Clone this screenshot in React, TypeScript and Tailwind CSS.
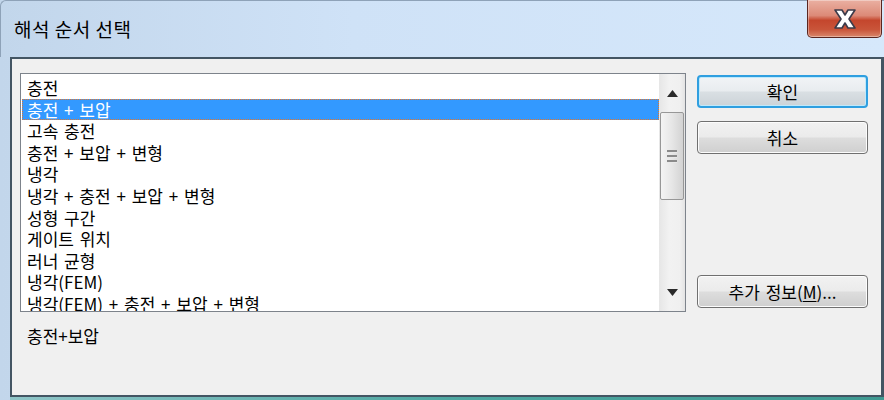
import React from 'react';

const font = { fontFamily: '"Noto Sans CJK KR", "Liberation Sans", sans-serif' };

const items = [
  '충전',
  '충전 + 보압',
  '고속 충전',
  '충전 + 보압 + 변형',
  '냉각',
  '냉각 + 충전 + 보압 + 변형',
  '성형 구간',
  '게이트 위치',
  '러너 균형',
  '냉각(FEM)',
  '냉각(FEM) + 충전 + 보압 + 변형',
];

function CloseButton() {
  return (
    <div className="absolute right-[2px] top-0 w-[75px] h-[38px] rounded-b-[5px] border border-t-0 border-[#5a2620] bg-[linear-gradient(to_bottom,#eab0a2_0%,#dc8a78_42%,#c4462d_55%,#c9553a_80%,#d9876b_100%)] flex items-center justify-center shadow-[inset_0_0_0_1px_rgba(255,255,255,0.35)]">
      <svg width="26" height="22" viewBox="0 0 26 22">
        <path
          d="M3 2 H10 L13 7 L16 2 H23 L17 11 L23 20 H16 L13 15 L10 20 H3 L9 11 Z"
          fill="#ffffff"
          stroke="#3b3b4a"
          strokeWidth="1.6"
          strokeLinejoin="round"
        />
      </svg>
    </div>
  );
}

function Button({ label, primary }: { label: React.ReactNode; primary?: boolean }) {
  return (
    <div
      className={
        'w-[171px] h-[33px] rounded-[4px] flex items-center justify-center text-[17px] leading-none text-black ' +
        (primary
          ? 'border-2 border-[#2f9fe0] shadow-[inset_0_0_0_1px_#bfe9fb] bg-[linear-gradient(to_bottom,#f1f4f6_0%,#e8ecef_48%,#d9dfe3_52%,#ccd3d8_100%)]'
          : 'border border-[#707070] shadow-[inset_0_0_0_1px_#fcfcfc] bg-[linear-gradient(to_bottom,#f2f2f2_0%,#ebebeb_48%,#dddddd_52%,#cfcfcf_100%)]')
      }
    >
      {label}
    </div>
  );
}

function Scrollbar() {
  return (
    <div className="w-[26px] h-full flex flex-col bg-[linear-gradient(to_right,#e6e6e6,#f2f2f2_40%,#f0f0f0_80%,#e3e3e3)]">
      <div className="h-[38px] flex items-center justify-center">
        <svg width="11" height="7" viewBox="0 0 11 7">
          <path d="M5.5 0 L11 7 H0 Z" fill="#2b2b2b" />
        </svg>
      </div>
      <div className="mx-[1px] h-[88px] rounded-[2px] border border-[#979797] bg-[linear-gradient(to_right,#f4f4f4,#e6e6e6_50%,#d3d3d3)] flex flex-col items-center justify-center gap-[2px]">
        <div className="w-[10px] h-[3px] bg-[#8a8a8a] border-b border-[#e8e8e8]" />
        <div className="w-[10px] h-[3px] bg-[#8a8a8a] border-b border-[#e8e8e8]" />
        <div className="w-[10px] h-[3px] bg-[#8a8a8a] border-b border-[#e8e8e8]" />
      </div>
      <div className="flex-1" />
      <div className="h-[38px] flex items-center justify-center">
        <svg width="11" height="7" viewBox="0 0 11 7">
          <path d="M0 0 H11 L5.5 7 Z" fill="#2b2b2b" />
        </svg>
      </div>
    </div>
  );
}

export default function App() {
  return (
    <div
      className="relative w-[884px] h-[400px] overflow-hidden flex flex-col bg-[linear-gradient(to_right,#c2d6eb,#cfe2f7_40%,#d6e8fb)]"
      style={font}
    >
      <div className="h-[57px] shrink-0 flex items-center pl-[13px] pb-[2px] border-t border-l border-[#8ea2b8] rounded-tl-[6px]">
        <span className="text-[19px] leading-none text-black tracking-[0.5px]">해석 순서 선택</span>
      </div>
      <CloseButton />

      <div className="ml-[10px] h-[340px] flex flex-col border-2 border-r-[3px] border-[#435563] bg-[#f0f0f0] pl-[8px] pt-[14px]">
        <div className="flex gap-[11px]">
          <div className="w-[666px] h-[239px] border border-[#7d838b] bg-white flex">
            <div className="flex-1 overflow-hidden pt-[3px] pl-[1px]">
              {items.map((it, i) => (
                <div
                  key={i}
                  className={
                    'h-[21.6px] flex items-center pl-[5px] text-[17px] leading-[21.6px] whitespace-nowrap [word-spacing:2px] ' +
                    (i === 1
                      ? 'bg-[#3399ff] text-white outline-1 outline-dotted outline-[#e2762c] -outline-offset-1'
                      : 'text-black')
                  }
                >
                  {it}
                </div>
              ))}
            </div>
            <Scrollbar />
          </div>
          <div className="flex flex-col pt-[2px] pb-[4px]">
            <Button label="확인" primary />
            <div className="h-[13px]" />
            <Button label="취소" />
            <div className="flex-1" />
            <Button
              label={
                <span className="[word-spacing:2px]">
                  추가 정보(<span className="underline underline-offset-2">M</span>)...
                </span>
              }
            />
          </div>
        </div>
        <div className="mt-[15px] pl-[7px] text-[17px] leading-none text-black">충전+보압</div>
      </div>
      <div className="ml-[10px] flex-1 bg-[linear-gradient(to_right,#8fc5c8,#4fa8a2_50%,#3f9a92)]" />
    </div>
  );
}
